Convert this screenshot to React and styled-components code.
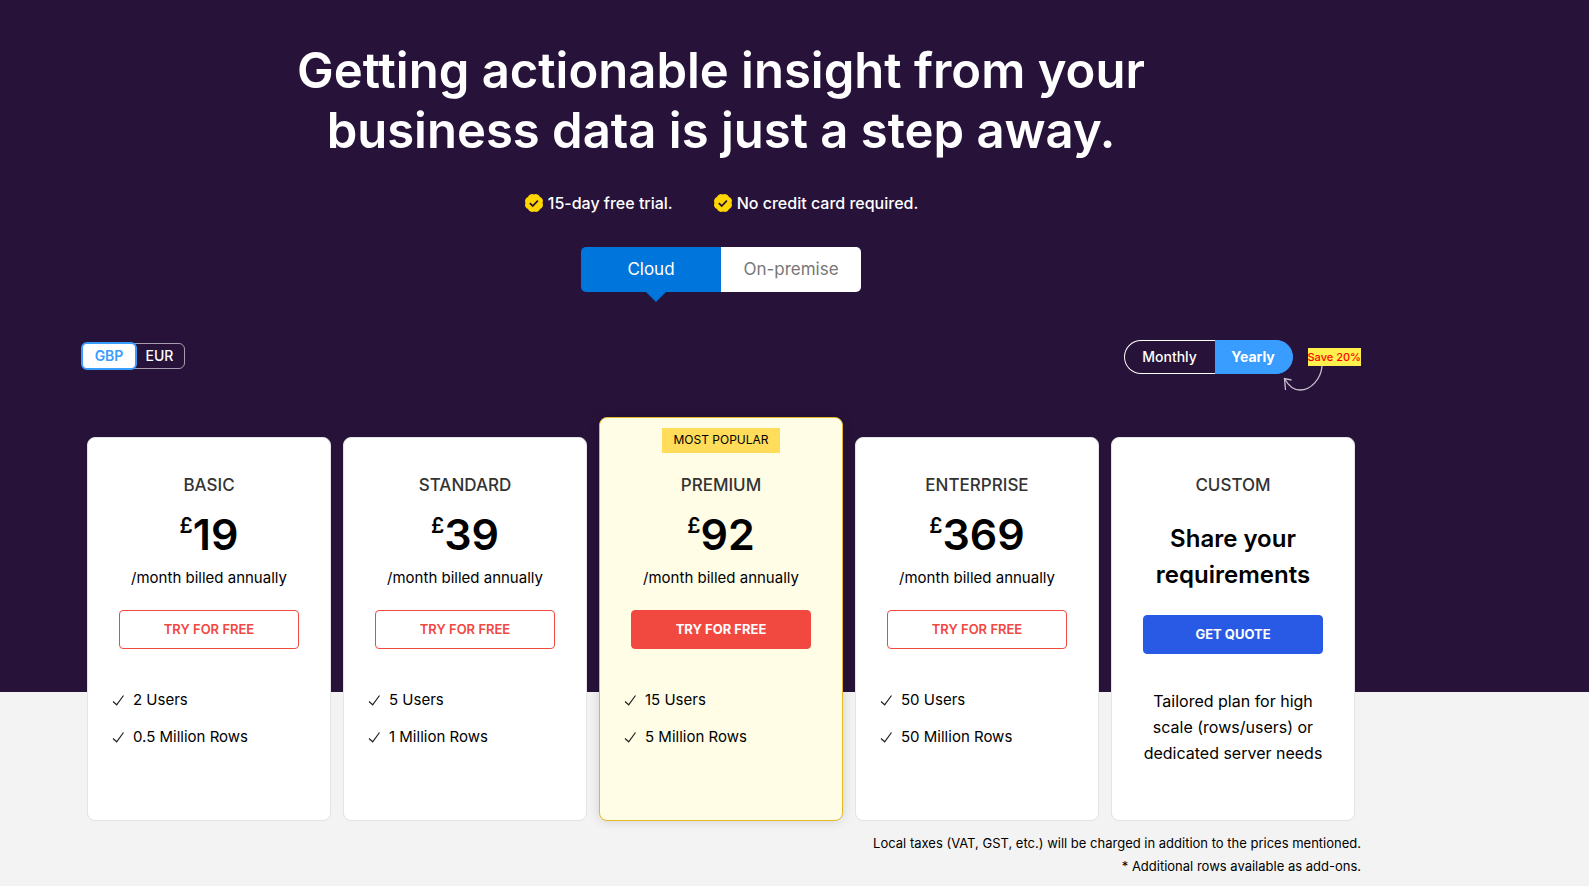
import React, { useState } from 'react';
import styled, { createGlobalStyle, css } from 'styled-components';

const GlobalStyle = createGlobalStyle`
  * {
    box-sizing: border-box;
  }

  body {
    margin: 0;
    background-color: #f3f3f3;
    color: #000;
    font-family: Inter, Roboto, sans-serif;
    font-size: 15px;
  }

  h1, h2, p, ul {
    margin: 0;
    padding: 0;
  }

  button {
    padding: 0 0 2px;
    font-family: inherit;
    cursor: pointer;
  }
`;

const Hero = styled.section`
  display: flow-root;
  background-color: #27123a;
`;

const Content = styled.div`
  margin-right: 147px;
`;

const Container = styled.div`
  max-width: 1280px;
  margin: 0 auto;
`;

const Title = styled.h1`
  max-width: 900px;
  margin: 0 auto;
  padding-top: 41px;
  color: #fff;
  font-size: 49px;
  font-weight: 600;
  line-height: 60px;
  text-align: center;
`;

const Benefits = styled.ul`
  display: flex;
  justify-content: center;
  gap: 40px;
  margin-top: 30px;
  list-style: none;
`;

const Benefit = styled.li`
  display: flex;
  align-items: center;
  gap: 4px;
  color: #fff;
  font-size: 16px;
  font-weight: 500;
  line-height: 24px;
`;

const Deployment = styled.div`
  display: flex;
  width: 280px;
  margin: 32px auto 0;
`;

const DeploymentTab = styled.button`
  position: relative;
  flex: 1;
  height: 45px;
  border: none;
  border-radius: ${({ $side }) => ($side === 'left' ? '5px 0 0 5px' : '0 5px 5px 0')};
  background-color: ${({ $active }) => ($active ? '#0075db' : '#fff')};
  color: ${({ $active }) => ($active ? '#fff' : '#777')};
  font-size: 17px;

  ${({ $active }) => $active && css`
    &::after {
      content: '';
      position: absolute;
      top: 100%;
      left: 65px;
      border: 10px solid transparent;
      border-top-color: #0075db;
      border-bottom: none;
    }
  `}
`;

const Controls = styled.div`
  display: flex;
  align-items: center;
  justify-content: space-between;
  margin-top: 48px;
`;

const Currency = styled.div`
  display: flex;
  align-items: center;
  padding-bottom: 2px;
`;

const CurrencyButton = styled.button`
  height: 26px;
  width: 51px;
  margin-left: -3px;
  border: 1px solid #a59dad;
  border-radius: 0 6px 6px 0;
  background-color: transparent;
  color: #fff;
  font-size: 14px;
  font-weight: 500;

  ${({ $active }) => $active && css`
    z-index: 1;
    height: 28px;
    width: 56px;
    margin-left: 0;
    border: 2px solid #399cff;
    border-radius: 6px;
    background-color: #fff;
    color: #399cff;
    font-weight: 600;
  `}
`;

const Billing = styled.div`
  position: relative;
  display: flex;
  align-items: center;
`;

const BillingButton = styled.button`
  height: 34px;
  font-size: 14px;
  border: 1px solid ${({ $active }) => ($active ? '#399cff' : '#fff')};
  background-color: ${({ $active }) => ($active ? '#399cff' : 'transparent')};
  color: #fff;
  font-weight: ${({ $active }) => ($active ? 700 : 500)};

  &:first-child {
    width: 91px;
    border-right: none;
    border-radius: 17px 0 0 17px;
  }

  &:nth-child(2) {
    width: 78px;
    border-left: none;
    border-radius: 0 17px 17px 0;
  }
`;

const Save = styled.span`
  margin-left: 15px;
  background-color: #fff04d;
  color: #f00;
  font-size: 11px;
  font-weight: 500;
  line-height: 18px;
`;

const SaveArrow = styled.svg`
  position: absolute;
  top: 26px;
  right: 38px;
`;

const Plans = styled.div`
  display: grid;
  grid-template-columns: repeat(5, 1fr);
  gap: 12px;
  align-items: end;
  margin: 43px 6px -129px;
`;

const Card = styled.article`
  display: flex;
  flex-direction: column;
  align-items: center;
  min-height: 384px;
  padding: 34px 24px 0;
  border: 1px solid #e4e4e4;
  border-radius: 8px;
  background-color: #fff;
  text-align: center;

  ${({ $popular }) => $popular && css`
    min-height: 404px;
    padding-top: 10px;
    border-color: #e2b927;
    background-color: #fffde6;
    box-shadow: 0 0 12px rgba(0, 0, 0, 0.14);
  `}
`;

const Ribbon = styled.span`
  margin-bottom: 19px;
  padding: 0 11px 2px;
  background-color: #ffdc5a;
  font-size: 12px;
  line-height: 23px;
`;

const PlanName = styled.h2`
  color: #333;
  font-size: 17px;
  font-weight: 500;
  line-height: 26px;
`;

const Price = styled.p`
  display: flex;
  align-items: flex-start;
  margin-top: 10px;
  font-size: 43px;
  font-weight: 600;
  line-height: 52px;
`;

const Symbol = styled.span`
  font-size: 21px;
  font-weight: 600;
  line-height: 36px;
`;

const Period = styled.p`
  margin-top: 6px;
  font-size: 15px;
  line-height: 24px;
`;

const Pitch = styled.p`
  margin-top: 23px;
  font-size: 24px;
  font-weight: 600;
  line-height: 36px;
`;

const variants = {
  outline: css`
    border-color: #f1483f;
    background-color: #fff;
    color: #f1483f;
    font-weight: 600;
  `,
  solid: css`
    border-color: #f1483f;
    background-color: #f1483f;
    color: #fff;
    font-weight: 700;
  `,
  quote: css`
    margin-top: 22px;
    border-color: #285ae6;
    background-color: #285ae6;
    color: #fff;
    font-weight: 700;
  `,
};

const Action = styled.button`
  width: 180px;
  max-width: 100%;
  height: 39px;
  flex-shrink: 0;
  margin-top: 20px;
  border: 1px solid;
  border-radius: 4px;
  font-size: 13px;
  ${({ $variant }) => variants[$variant]}
`;

const Features = styled.ul`
  align-self: stretch;
  margin-top: 32px;
  list-style: none;
`;

const Feature = styled.li`
  display: flex;
  align-items: center;
  gap: 8px;
  height: 37px;
  font-size: 15px;
  text-align: left;
`;

const Description = styled.p`
  margin-top: 34px;
  font-size: 16px;
  line-height: 26px;
`;

const Notes = styled.div`
  padding-top: 140px;
  font-size: 13px;
  line-height: 23px;
  text-align: right;
`;

const BadgeIcon = () => (
  <svg width="20" height="20" viewBox="0 0 20 20" aria-hidden="true">
    <g fill="#ffd600">
      <circle cx="10" cy="10" r="8.600" />
      {[0, 45, 90, 135, 180, 225, 270, 315].map((angle) => (
        <circle key={angle} cx="10" cy="4" r="3.300" transform={`rotate(${angle + 22} 10 10)`} />
      ))}
    </g>
    <path d="M5.800 10.200l2.900 2.800 5.200-5.400" fill="none" stroke="#27123a" strokeWidth="1.800" />
  </svg>
);

const CheckIcon = () => (
  <svg width="13" height="12" viewBox="0 0 13 12" aria-hidden="true">
    <path d="M1 7.500l3.700 3.300L11.500 1.500" fill="none" stroke="#222" strokeWidth="1.200" />
  </svg>
);

const plans = [
  { name: 'BASIC', price: '19', features: ['2 Users', '0.5 Million Rows'] },
  { name: 'STANDARD', price: '39', features: ['5 Users', '1 Million Rows'] },
  { name: 'PREMIUM', price: '92', features: ['15 Users', '5 Million Rows'], popular: true },
  { name: 'ENTERPRISE', price: '369', features: ['50 Users', '50 Million Rows'] },
];

const Plan = ({ name, price, features, popular }) => (
  <Card $popular={popular}>
    {popular && <Ribbon>MOST POPULAR</Ribbon>}
    <PlanName>{name}</PlanName>
    <Price>
      <Symbol>£</Symbol>
      {price}
    </Price>
    <Period>/month billed annually</Period>
    <Action type="button" $variant={popular ? 'solid' : 'outline'}>TRY FOR FREE</Action>
    <Features>
      {features.map((feature) => (
        <Feature key={feature}>
          <CheckIcon />
          {feature}
        </Feature>
      ))}
    </Features>
  </Card>
);

const App = () => {
  const [deployment, setDeployment] = useState('Cloud');
  const [currency, setCurrency] = useState('GBP');
  const [billing, setBilling] = useState('Yearly');

  return (
    <>
      <GlobalStyle />
      <Hero>
        <Content>
          <Container>
            <Title>Getting actionable insight from your business data is just a step away.</Title>
            <Benefits>
              <Benefit><BadgeIcon />15-day free trial.</Benefit>
              <Benefit><BadgeIcon />No credit card required.</Benefit>
            </Benefits>
            <Deployment>
              {['Cloud', 'On-premise'].map((item, i) => (
                <DeploymentTab
                  key={item}
                  type="button"
                  $side={i === 0 ? 'left' : 'right'}
                  $active={deployment === item}
                  onClick={() => setDeployment(item)}
                >
                  {item}
                </DeploymentTab>
              ))}
            </Deployment>
            <Controls>
              <Currency>
                {['GBP', 'EUR'].map((item) => (
                  <CurrencyButton
                    key={item}
                    type="button"
                    $active={currency === item}
                    onClick={() => setCurrency(item)}
                  >
                    {item}
                  </CurrencyButton>
                ))}
              </Currency>
              <Billing>
                {['Monthly', 'Yearly'].map((item) => (
                  <BillingButton
                    key={item}
                    type="button"
                    $active={billing === item}
                    onClick={() => setBilling(item)}
                  >
                    {item}
                  </BillingButton>
                ))}
                <Save>Save 20%</Save>
                <SaveArrow width="40" height="26" viewBox="0 0 40 26" fill="none" stroke="#c9c2ce" aria-hidden="true">
                  <path d="M39 0C38 13 28 24 17 24C10 24 5 19 1.500 12.500" strokeWidth="1.300" />
                  <path d="M2.500 24L1.500 12.500L8.500 14" strokeWidth="1.300" />
                </SaveArrow>
              </Billing>
            </Controls>
            <Plans>
              {plans.map((plan) => <Plan key={plan.name} {...plan} />)}
              <Card>
                <PlanName>CUSTOM</PlanName>
                <Pitch>Share your requirements</Pitch>
                <Action type="button" $variant="quote">GET QUOTE</Action>
                <Description>Tailored plan for high scale (rows/users) or dedicated server needs</Description>
              </Card>
            </Plans>
          </Container>
        </Content>
      </Hero>
      <Content>
        <Container>
          <Notes>
            <p>Local taxes (VAT, GST, etc.) will be charged in addition to the prices mentioned.</p>
            <p>* Additional rows available as add-ons.</p>
          </Notes>
        </Container>
      </Content>
    </>
  );
};

export default App;
